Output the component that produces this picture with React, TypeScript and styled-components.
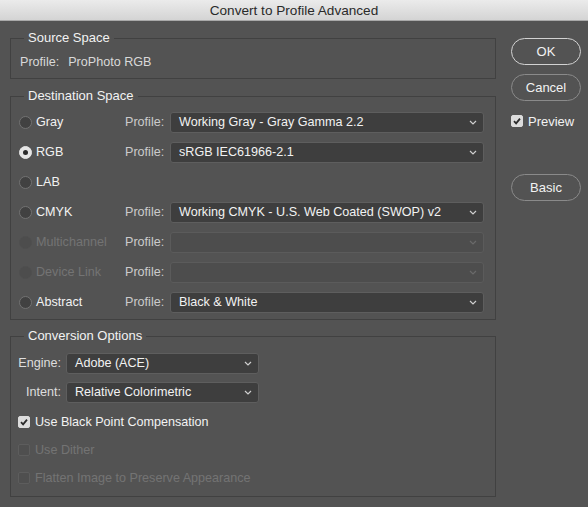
import React from 'react';
import styled, { createGlobalStyle } from 'styled-components';

const GlobalStyle = createGlobalStyle`
  html, body {
    margin: 0;
    padding: 0;
    background: #535353;
  }
  body {
    font-family: "Liberation Sans", Arial, sans-serif;
    font-size: 12.6px;
    color: #f0f0f0;
  }
`;

const Window = styled.div`
  width: 588px;
  height: 507px;
  background: #535353;
  display: flex;
  flex-direction: column;
`;

const TitleBar = styled.div`
  height: 20px;
  line-height: 21px;
  background: linear-gradient(#ebebeb, #d4d4d4);
  border-bottom: 1px solid #a9a9a9;
  color: #2a2a2a;
  text-align: center;
  font-size: 13.6px;
`;

const Body = styled.div`
  display: flex;
  gap: 15px;
  padding: 9px 0 0 10px;
`;

const LeftColumn = styled.div`
  width: 486px;
  display: flex;
  flex-direction: column;
`;

const Group = styled.fieldset<{ $gap?: number }>`
  margin: ${p => p.$gap ?? 0}px 0 0 0;
  padding: 0;
  min-inline-size: 0;
  border: 1px solid #414141;
`;

const Legend = styled.legend`
  margin-left: 13px;
  padding: 0 4px;
  line-height: 16px;
  font-size: 13px;
  color: #f2f2f2;
`;

const SourceRow = styled.div`
  display: flex;
  gap: 9px;
  height: 20px;
  align-items: center;
  padding: 6px 0 6px 9px;
  color: #d9d9d9;
`;

const DestList = styled.div`
  padding: 3px 0 2px 8px;
`;

const DestRow = styled.div`
  display: grid;
  grid-template-columns: 106px 45px 314px;
  align-items: center;
  height: 30px;
`;

const RadioLabel = styled.div<{ $disabled?: boolean }>`
  display: flex;
  align-items: center;
  gap: 4px;
  color: ${p => (p.$disabled ? '#747474' : '#f2f2f2')};
`;

const RadioDot = styled.span<{ $checked?: boolean; $disabled?: boolean }>`
  box-sizing: border-box;
  width: 13px;
  height: 13px;
  border-radius: 50%;
  display: flex;
  align-items: center;
  justify-content: center;
  background: ${p => (p.$checked ? '#e6e6e6' : p.$disabled ? '#4d4d4d' : '#414141')};
  border: 1px solid ${p => (p.$checked ? '#e6e6e6' : p.$disabled ? '#4f4f4f' : '#727272')};
  &::after {
    content: '';
    display: ${p => (p.$checked ? 'block' : 'none')};
    width: 5px;
    height: 5px;
    border-radius: 50%;
    background: #2b2b2b;
  }
`;

const FieldLabel = styled.span`
  color: #cbcbcb;
`;

const SelectBox = styled.div<{ $width?: number; $disabled?: boolean }>`
  box-sizing: border-box;
  width: ${p => (p.$width ? `${p.$width}px` : '100%')};
  height: 21px;
  display: flex;
  align-items: center;
  justify-content: space-between;
  padding: 0 6px 0 8px;
  border-radius: 3px;
  background: ${p => (p.$disabled ? '#4d4d4d' : '#3e3e3e')};
  border: 1px solid ${p => (p.$disabled ? '#5b5b5b' : '#5e5e5e')};
  color: #f2f2f2;
  white-space: nowrap;
  svg path {
    stroke: ${p => (p.$disabled ? '#6a6a6a' : '#cfcfcf')};
  }
`;

const OptionsList = styled.div`
  padding: 8px 0 4px 0;
`;

const FieldRow = styled.div<{ $gapTop?: number }>`
  display: grid;
  grid-template-columns: 50px 193px;
  column-gap: 5px;
  align-items: center;
  height: 22px;
  margin-top: ${p => p.$gapTop ?? 0}px;
  ${FieldLabel} {
    text-align: right;
    color: #dedede;
  }
`;

const CheckRow = styled.div<{ $disabled?: boolean; $indent?: number; $gapTop?: number }>`
  display: flex;
  align-items: center;
  gap: 5px;
  height: 28px;
  margin-top: ${p => p.$gapTop ?? 0}px;
  padding-left: ${p => p.$indent ?? 0}px;
  color: ${p => (p.$disabled ? '#737373' : '#f2f2f2')};
`;

const CheckBox = styled.span<{ $checked?: boolean; $disabled?: boolean }>`
  box-sizing: border-box;
  width: 12px;
  height: 12px;
  border-radius: 2px;
  display: flex;
  align-items: center;
  justify-content: center;
  background: ${p => (p.$checked ? '#dcdcdc' : '#4f4f4f')};
  border: 1px solid ${p => (p.$checked ? '#dcdcdc' : '#5d5d5d')};
`;

const RightColumn = styled.div`
  width: 70px;
  padding-top: 8px;
  display: flex;
  flex-direction: column;
`;

const Button = styled.button<{ $primary?: boolean; $gapTop?: number }>`
  box-sizing: border-box;
  width: 70px;
  height: 27px;
  margin-top: ${p => p.$gapTop ?? 0}px;
  border-radius: 14px;
  background: transparent;
  border: ${p => (p.$primary ? '1.5px solid #d2d2d2' : '1px solid #8a8a8a')};
  color: #f2f2f2;
  font-family: inherit;
  font-size: 13px;
  padding: 0;
`;

const PreviewRow = styled(CheckRow)`
  height: 20px;
  margin-top: 10px;
  font-size: 13px;
`;

const Chevron = () => (
  <svg width="8" height="5" viewBox="0 0 8 5">
    <path d="M1 1 L4 4 L7 1" fill="none" strokeWidth="1.2" />
  </svg>
);

const Check = () => (
  <svg width="10" height="10" viewBox="0 0 10 10">
    <path d="M2 5.2 L4.1 7.3 L8 2.6" fill="none" stroke="#2a2a2a" strokeWidth="1.8" />
  </svg>
);

type Dest = {
  name: string;
  checked?: boolean;
  disabled?: boolean;
  profile?: string;
  noSelect?: boolean;
};

const destinations: Dest[] = [
  { name: 'Gray', profile: 'Working Gray - Gray Gamma 2.2' },
  { name: 'RGB', checked: true, profile: 'sRGB IEC61966-2.1' },
  { name: 'LAB', noSelect: true },
  { name: 'CMYK', profile: 'Working CMYK - U.S. Web Coated (SWOP) v2' },
  { name: 'Multichannel', disabled: true, profile: '' },
  { name: 'Device Link', disabled: true, profile: '' },
  { name: 'Abstract', profile: 'Black & White' },
];

export default function App() {
  return (
    <Window>
      <GlobalStyle />
      <TitleBar>Convert to Profile Advanced</TitleBar>
      <Body>
        <LeftColumn>
          <Group>
            <Legend>Source Space</Legend>
            <SourceRow>
              <span>Profile:</span>
              <span>ProPhoto RGB</span>
            </SourceRow>
          </Group>

          <Group $gap={9}>
            <Legend>Destination Space</Legend>
            <DestList>
              {destinations.map(d => (
                <DestRow key={d.name}>
                  <RadioLabel $disabled={d.disabled}>
                    <RadioDot $checked={d.checked} $disabled={d.disabled} />
                    {d.name}
                  </RadioLabel>
                  {!d.noSelect && <FieldLabel>Profile:</FieldLabel>}
                  {!d.noSelect && (
                    <SelectBox $disabled={d.disabled}>
                      <span>{d.profile}</span>
                      <Chevron />
                    </SelectBox>
                  )}
                </DestRow>
              ))}
            </DestList>
          </Group>

          <Group $gap={8}>
            <Legend>Conversion Options</Legend>
            <OptionsList>
              <FieldRow>
                <FieldLabel>Engine:</FieldLabel>
                <SelectBox>
                  <span>Adobe (ACE)</span>
                  <Chevron />
                </SelectBox>
              </FieldRow>
              <FieldRow $gapTop={7}>
                <FieldLabel>Intent:</FieldLabel>
                <SelectBox>
                  <span>Relative Colorimetric</span>
                  <Chevron />
                </SelectBox>
              </FieldRow>
              <CheckRow $indent={7} $gapTop={5}>
                <CheckBox $checked>
                  <Check />
                </CheckBox>
                Use Black Point Compensation
              </CheckRow>
              <CheckRow $indent={7} $disabled>
                <CheckBox $disabled />
                Use Dither
              </CheckRow>
              <CheckRow $indent={7} $disabled>
                <CheckBox $disabled />
                Flatten Image to Preserve Appearance
              </CheckRow>
            </OptionsList>
          </Group>
        </LeftColumn>

        <RightColumn>
          <Button $primary>OK</Button>
          <Button $gapTop={9}>Cancel</Button>
          <PreviewRow>
            <CheckBox $checked>
              <Check />
            </CheckBox>
            Preview
          </PreviewRow>
          <Button $gapTop={43}>Basic</Button>
        </RightColumn>
      </Body>
    </Window>
  );
}
